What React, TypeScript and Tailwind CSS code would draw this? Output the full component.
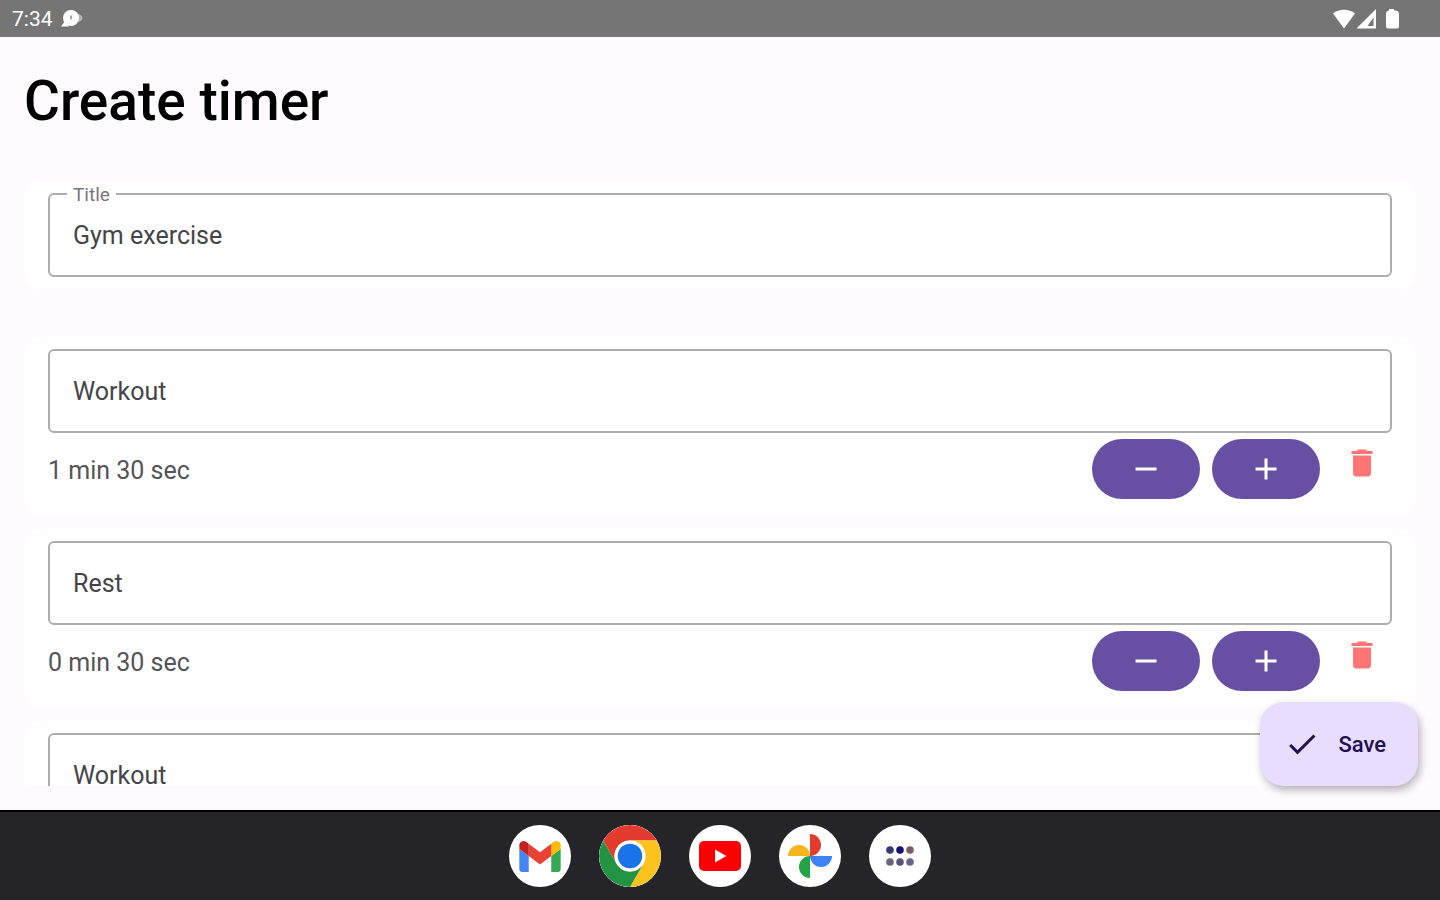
import { useState } from 'react';
import type { ReactNode } from 'react';

interface Interval {
  id: number;
  name: string;
  seconds: number;
}

const STEP = 10;

const INITIAL_INTERVALS: Interval[] = [
  { id: 1, name: 'Workout', seconds: 90 },
  { id: 2, name: 'Rest', seconds: 30 },
  { id: 3, name: 'Workout', seconds: 90 },
];

function formatDuration(total: number): string {
  return `${Math.floor(total / 60)} min ${total % 60} sec`;
}

// ── Icons ────────────────────────────────────────────────────────────

function Icon({ d }: { d: string }) {
  return (
    <svg className="size-9 shrink-0" viewBox="0 0 24 24" fill="currentColor" aria-hidden="true">
      <path d={d} />
    </svg>
  );
}

const ICONS = {
  minus: 'M19 13H5v-2h14v2z',
  plus: 'M19 13h-6v6h-2v-6H5v-2h6V5h2v6h6v2z',
  trash: 'M6 19c0 1.1.9 2 2 2h8c1.1 0 2-.9 2-2V7H6v12zM19 4h-3.5l-1-1h-5l-1 1H5v2h14V4z',
  check: 'M9 16.17 4.83 12l-1.42 1.41L9 19 21 7l-1.41-1.41z',
};

function NotificationIcon() {
  return (
    <svg width="24" height="20" viewBox="0 0 24 20" fill="#fff" aria-hidden="true">
      <path d="M17 5c6 1 6 7 0 8z" opacity=".45" />
      <circle cx="10" cy="9" r="8" />
      <path d="M4 12 0 17.500h8z" />
      <path d="M10 6.500v4" stroke="#a5a5a5" strokeWidth="2" />
    </svg>
  );
}

function StatusIcons() {
  return (
    <svg width="68" height="22" viewBox="0 0 68 22" fill="#fff" aria-hidden="true">
      <path d="M1 5.500C7 .5 17 .5 23 5.500L12 20.500z" />
      <path fillRule="evenodd" d="M44 1v19.500H24.500zM41.500 9.500 35.500 18H41.500z" />
      <path d="M57 1h5v1.500h1.500Q67 3 67 5.500v13q0 2-2 2H56q-2 0-2-2v-13Q54 3 57 2.500z" />
    </svg>
  );
}

function GmailLogo() {
  return (
    <svg width="42" height="31" viewBox="52 42 88 66" aria-hidden="true">
      <path fill="#4285f4" d="M58 108h14V74L52 59v43c0 3.320 2.690 6 6 6" />
      <path fill="#34a853" d="M120 108h14c3.320 0 6-2.690 6-6V59l-20 15" />
      <path fill="#fbbc04" d="M120 48v26l20-15v-8c0-7.420-8.470-11.650-14.400-7.200" />
      <path fill="#ea4335" d="M72 74V48l24 18 24-18v26L96 92" />
      <path fill="#c5221f" d="M52 51v8l20 15V48l-5.600-4.200c-5.940-4.450-14.400-.22-14.400 7.200" />
    </svg>
  );
}

function ChromeLogo() {
  return (
    <svg width="62" height="62" viewBox="0 0 48 48" aria-hidden="true">
      <circle cx="24" cy="24" r="24" fill="#fff" />
      <path fill="#e33b2e" d="M3.220 12A24 24 0 0 1 44.780 12H24a12 12 0 0 0-10.390 18z" />
      <path fill="#fcc31e" d="M44.780 12A24 24 0 0 1 24 48l10.390-18A12 12 0 0 0 24 12z" />
      <path fill="#229342" d="M24 48A24 24 0 0 1 3.220 12l10.390 18a12 12 0 0 0 20.780 0z" />
      <circle cx="24" cy="24" r="12" fill="#fff" />
      <circle cx="24" cy="24" r="9.500" fill="#1a73e8" />
    </svg>
  );
}

function YoutubeLogo() {
  return (
    <svg width="42" height="30" viewBox="0 0 42 30" aria-hidden="true">
      <rect width="42" height="30" rx="5" fill="#f00" />
      <path fill="#fff" d="M16 8.500v13L27.500 15z" />
    </svg>
  );
}

function PhotosLogo() {
  return (
    <svg width="44" height="44" viewBox="0 0 44 44" aria-hidden="true">
      <path fill="#f6b51e" d="M0 22a11 11 0 0 1 22 0z" />
      <path fill="#e33b2e" d="M22 0a11 11 0 0 1 0 22z" />
      <path fill="#3c82f2" d="M44 22a11 11 0 0 1-22 0z" />
      <path fill="#25a244" d="M22 44a11 11 0 0 1 0-22z" />
    </svg>
  );
}

function AppsLogo() {
  return (
    <svg width="28" height="20" viewBox="0 0 28 20" aria-hidden="true">
      <circle cx="4" cy="4" r="3.800" fill="#343a78" />
      <circle cx="14" cy="4" r="3.800" fill="#14106e" />
      <circle cx="24" cy="4" r="3.800" fill="#7c5a68" />
      <circle cx="4" cy="16" r="3.800" fill="#66637a" />
      <circle cx="14" cy="16" r="3.800" fill="#57547a" />
      <circle cx="24" cy="16" r="3.800" fill="#66638a" />
    </svg>
  );
}

// ── Components ───────────────────────────────────────────────────────

function StatusBar() {
  return (
    <header className="flex h-[37px] shrink-0 items-center justify-between bg-[#757575] pr-10 pl-3 text-white">
      <div className="flex items-center gap-2">
        <span className="text-[21px] leading-6">7:34</span>
        <NotificationIcon />
      </div>
      <StatusIcons />
    </header>
  );
}

function Card({ children }: { children: ReactNode }) {
  return <section className="rounded-2xl bg-white px-6 py-3">{children}</section>;
}

interface TextFieldProps {
  id: string;
  label: string;
  value: string;
  floating?: boolean;
  onChange: (value: string) => void;
}

function TextField({ id, label, value, floating, onChange }: TextFieldProps) {
  return (
    <div className="relative">
      {floating && (
        <label
          htmlFor={id}
          className="absolute -top-2 left-[19px] bg-white px-1.5 text-[19px] leading-5 text-[#79747e]"
        >
          {label}
        </label>
      )}
      <input
        id={id}
        type="text"
        aria-label={label}
        value={value}
        onChange={(e) => onChange(e.target.value)}
        className="block h-[84px] w-full rounded-md border-2 border-[#adadad] bg-transparent px-[23px] text-[25px] text-[#454449] outline-none focus:border-[#6750a4]"
      />
    </div>
  );
}

function PillButton({ label, icon, onClick }: { label: string; icon: string; onClick: () => void }) {
  return (
    <button
      type="button"
      aria-label={label}
      onClick={onClick}
      className="flex h-15 w-27 items-center justify-center rounded-full bg-[#6750a4] text-white"
    >
      <Icon d={icon} />
    </button>
  );
}

interface IntervalCardProps {
  interval: Interval;
  onChange: (patch: Partial<Interval>) => void;
  onDelete: () => void;
}

function IntervalCard({ interval, onChange, onDelete }: IntervalCardProps) {
  return (
    <Card>
      <TextField
        id={`interval-${interval.id}`}
        label="Interval name"
        value={interval.name}
        onChange={(name) => onChange({ name })}
      />
      <div className="flex h-18 items-center gap-3">
        <span className="flex-1 pt-1 text-[25px] leading-8 text-[#555459]">
          {formatDuration(interval.seconds)}
        </span>
        <PillButton
          label="Decrease time"
          icon={ICONS.minus}
          onClick={() => onChange({ seconds: Math.max(0, interval.seconds - STEP) })}
        />
        <PillButton
          label="Increase time"
          icon={ICONS.plus}
          onClick={() => onChange({ seconds: interval.seconds + STEP })}
        />
        <button
          type="button"
          aria-label="Delete interval"
          onClick={onDelete}
          className="flex size-15 items-center justify-center self-start text-[#ff7575]"
        >
          <Icon d={ICONS.trash} />
        </button>
      </div>
    </Card>
  );
}

function DockButton({ label, children }: { label: string; children: ReactNode }) {
  return (
    <button
      type="button"
      aria-label={label}
      className="flex size-[62px] items-center justify-center overflow-hidden rounded-full bg-white"
    >
      {children}
    </button>
  );
}

function Dock() {
  return (
    <nav className="flex h-[90px] shrink-0 items-center justify-center gap-7 border-t-2 border-black bg-[#252429]">
      <DockButton label="Gmail"><GmailLogo /></DockButton>
      <DockButton label="Chrome"><ChromeLogo /></DockButton>
      <DockButton label="YouTube"><YoutubeLogo /></DockButton>
      <DockButton label="Photos"><PhotosLogo /></DockButton>
      <DockButton label="All apps"><AppsLogo /></DockButton>
    </nav>
  );
}

export default function App() {
  const [title, setTitle] = useState('Gym exercise');
  const [intervals, setIntervals] = useState(INITIAL_INTERVALS);

  const updateInterval = (id: number, patch: Partial<Interval>) => {
    setIntervals((prev) => prev.map((it) => (it.id === id ? { ...it, ...patch } : it)));
  };

  const deleteInterval = (id: number) => {
    setIntervals((prev) => prev.filter((it) => it.id !== id));
  };

  return (
    <div className="flex h-screen flex-col bg-[#fefaff] font-[Roboto,sans-serif]">
      <StatusBar />

      <main className="relative flex min-h-0 flex-1 flex-col px-6 pb-6">
        <h1 className="pt-8 pb-12 text-[55px] leading-16 font-medium text-black">Create timer</h1>

        <div className="flex min-h-0 flex-1 flex-col gap-12 overflow-y-auto [scrollbar-width:none]">
          <Card>
            <TextField id="timer-title" label="Title" value={title} floating onChange={setTitle} />
          </Card>

          <div className="flex flex-col gap-3">
            {intervals.map((interval) => (
              <IntervalCard
                key={interval.id}
                interval={interval}
                onChange={(patch) => updateInterval(interval.id, patch)}
                onDelete={() => deleteInterval(interval.id)}
              />
            ))}
          </div>
        </div>

        {/* Floating save button */}
        <button
          type="button"
          className="absolute right-[22px] bottom-6 flex h-21 items-center gap-[18px] rounded-3xl bg-[#e8ddff] pr-8 pl-6 text-[22px] font-medium text-[#21104f] shadow-[2px_4px_8px_rgba(0,0,0,0.3)]"
        >
          <Icon d={ICONS.check} />
          Save
        </button>
      </main>

      <Dock />
    </div>
  );
}
